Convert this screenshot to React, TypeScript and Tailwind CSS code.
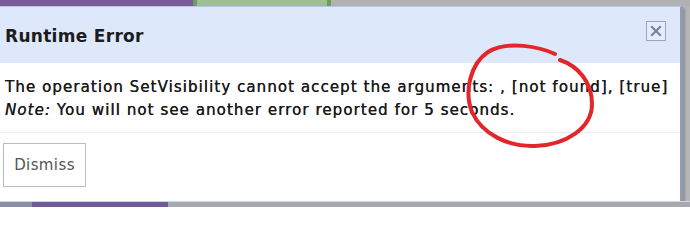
export default function App() {
  return (
    <div
      className="relative w-[690px] h-[207px] overflow-hidden bg-[#b5b5b5] flex flex-col"
      style={{ fontFamily: "'DejaVu Sans', 'Noto Sans', sans-serif" }}
    >
      {/* background strip above the dialog */}
      <div className="flex h-[6px] shrink-0">
        <div className="w-[193px] bg-[#775a97]" />
        <div className="w-[4px] bg-[#6f9a6c]" />
        <div className="w-[130px] bg-[#9cbf98]" />
        <div className="w-[4px] bg-[#6f9a6c]" />
        <div className="flex-1 bg-[#b1b1b1]" />
      </div>

      {/* dialog */}
      <div className="mr-[7px] h-[195px] shrink-0 flex flex-col bg-white border-t border-[#b8c8e2] border-r-[3px] border-r-[#8e9cb4] shadow-[2px_2px_2px_rgba(0,0,0,0.2)]">
        <div className="h-[56px] bg-[#dde9fb] flex items-center justify-between pl-[5px] pr-[14px]">
          <h2 className="text-[17px] font-bold tracking-[0.3px] text-[#1c1c1c] mt-[3px]">
            Runtime Error
          </h2>
          <button className="w-[20px] h-[20px] -mt-[8px] border border-[#98a6bc] bg-[#e6edf8] flex items-center justify-center">
            <svg width="12" height="12" viewBox="0 0 12 12">
              <path
                d="M2 2 L10 10 M10 2 L2 10"
                stroke="#7585a0"
                strokeWidth="2.2"
                strokeLinecap="square"
              />
            </svg>
          </button>
        </div>
        <div className="h-[70px] px-[5px] pt-[13px] border-b border-[#ececec] text-[15px] leading-[23px] tracking-[1.08px] text-[#1a1a1a] whitespace-nowrap [text-shadow:0.3px_0_0_#1a1a1a]">
          <p>
            The operation SetVisibility cannot accept the arguments: , [not
            found], [true]
          </p>
          <p>
            <em>Note:</em> You will not see another error reported for 5
            seconds.
          </p>
        </div>
        <div className="flex-1 pt-[10px] pl-[3px]">
          <button className="w-[83px] h-[44px] border border-[#bcbcbc] text-[15px] tracking-[0.4px] text-[#555]">
            Dismiss
          </button>
        </div>
      </div>

      {/* strip below */}
      <div className="flex flex-1 border-t border-[#c9d8ee]">
        <div className="w-[32px] bg-[#8a8ea0]" />
        <div className="w-[136px] bg-[#6e5a97]" />
        <div className="flex-1 bg-[#a8a8b0]" />
      </div>

      {/* red hand-drawn annotation */}
      <svg
        className="absolute inset-0 pointer-events-none"
        width="690"
        height="207"
        viewBox="0 0 690 207"
      >
        <path
          d="M555 54 C540 47 508 40 488 52 C470 64 464 92 472 112 C482 134 508 147 535 146 C566 145 592 128 592 104 C592 82 578 66 560 60"
          fill="none"
          stroke="#e2262a"
          strokeWidth="4"
          strokeLinecap="round"
        />
      </svg>
    </div>
  );
}
